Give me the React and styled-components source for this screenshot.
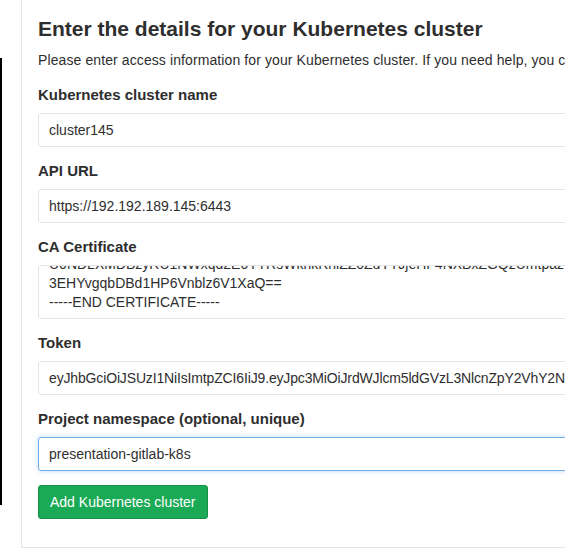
import React, { useEffect, useRef } from 'react';
import styled, { createGlobalStyle } from 'styled-components';

const GlobalStyle = createGlobalStyle`
  html, body {
    margin: 0;
    padding: 0;
    background: #fff;
    overflow: hidden;
  }
  body {
    font-family: "Liberation Sans", Arial, sans-serif;
    color: #2e2e2e;
  }
`;

const Page = styled.div`
  display: flex;
  flex-direction: row;
  align-items: flex-start;
  width: 700px;
  height: 550px;
`;

const SideEdge = styled.div`
  width: 21px;
  flex: none;
  padding-top: 58px;
`;

const SideLine = styled.div`
  height: 447px;
  border-left: 2px solid #000;
`;

const Panel = styled.section`
  flex: none;
  width: 640px;
  height: 548px;
  box-sizing: border-box;
  border-left: 1px solid #e5e5e5;
  border-bottom: 1px solid #e5e5e5;
  padding: 16px 0 0 16px;
`;

const Title = styled.h4`
  margin: 0;
  font-size: 21px;
  line-height: 26px;
  font-weight: 700;
  color: #2e2e2e;
`;

const Intro = styled.p`
  margin: 8px 0 15px;
  font-size: 14px;
  line-height: 20px;
  letter-spacing: 0.1px;
  white-space: nowrap;
  color: #2e2e2e;
`;

const Form = styled.form`
  display: flex;
  flex-direction: column;
  gap: 14px;
`;

const Field = styled.div`
  display: flex;
  flex-direction: column;
  gap: 8px;
`;

const Label = styled.label`
  font-size: 15px;
  line-height: 20px;
  font-weight: 700;
  color: #2e2e2e;
`;

const Input = styled.input`
  box-sizing: border-box;
  width: 580px;
  height: 34px;
  padding: 6px 10px;
  font-family: inherit;
  font-size: 14px;
  letter-spacing: ${p => (p.$tight ? '-0.15px' : 'normal')};
  color: #2e2e2e;
  background: #fff;
  border: 1px solid ${p => (p.$focused ? '#73afea' : '#e5e5e5')};
  border-radius: 3px;
  box-shadow: ${p => (p.$focused ? '0 0 4px rgba(115, 175, 234, 0.5)' : 'none')};
  outline: none;
`;

const TextArea = styled.textarea`
  box-sizing: border-box;
  width: 580px;
  height: 54px;
  padding: 4px 10px 6px;
  font-family: inherit;
  font-size: 14px;
  line-height: 19px;
  color: #2e2e2e;
  background: #fff;
  border: 1px solid #e5e5e5;
  border-radius: 3px;
  resize: none;
  overflow: hidden;
  outline: none;
  white-space: pre;
`;

const Actions = styled.div`
  display: flex;
`;

const Button = styled.button`
  height: 34px;
  padding: 0 11px;
  font-family: inherit;
  font-size: 14px;
  color: #fff;
  background: #1aaa55;
  border: 1px solid #168f48;
  border-radius: 3px;
  cursor: pointer;
`;

const certificate = [
  '-----BEGIN CERTIFICATE-----',
  'MIICyDCCAbCgAwIBAgIBADANBgkqhkiG9w0BAQsFADAVMRMwEQYDVQQDEwprdWJl',
  'U0NDLXMDBzyRU1NWxqd2E0YTRsWkhkRnlZZ0ZuYTJjeHF4NXBxZGQzUmtpazVmR',
  '3EHYvgqbDBd1HP6Vnblz6V1XaQ==',
  '-----END CERTIFICATE-----',
].join('\n');

const token =
  'eyJhbGciOiJSUzI1NiIsImtpZCI6IiJ9.eyJpc3MiOiJrdWJlcm5ldGVzL3NlcnZpY2VhY2NvdW50Iiwia3ViZXJuZXRlcy5pbyJ9';

const App = () => {
  const certRef = useRef(null);

  useEffect(() => {
    if (certRef.current) certRef.current.scrollTop = certRef.current.scrollHeight;
  }, []);

  return (
    <>
      <GlobalStyle />
      <Page>
        <SideEdge>
          <SideLine />
        </SideEdge>
        <Panel>
          <Title>Enter the details for your Kubernetes cluster</Title>
          <Intro>
            Please enter access information for your Kubernetes cluster. If you need help, you can read our documentation on Kubernetes
          </Intro>
          <Form onSubmit={e => e.preventDefault()}>
            <Field>
              <Label>Kubernetes cluster name</Label>
              <Input defaultValue="cluster145" />
            </Field>
            <Field>
              <Label>API URL</Label>
              <Input defaultValue="https://192.192.189.145:6443" />
            </Field>
            <Field>
              <Label>CA Certificate</Label>
              <TextArea ref={certRef} readOnly defaultValue={certificate} />
            </Field>
            <Field>
              <Label>Token</Label>
              <Input $tight defaultValue={token} />
            </Field>
            <Field>
              <Label>Project namespace (optional, unique)</Label>
              <Input $focused defaultValue="presentation-gitlab-k8s" />
            </Field>
            <Actions>
              <Button type="submit">Add Kubernetes cluster</Button>
            </Actions>
          </Form>
        </Panel>
      </Page>
    </>
  );
};

export default App;
